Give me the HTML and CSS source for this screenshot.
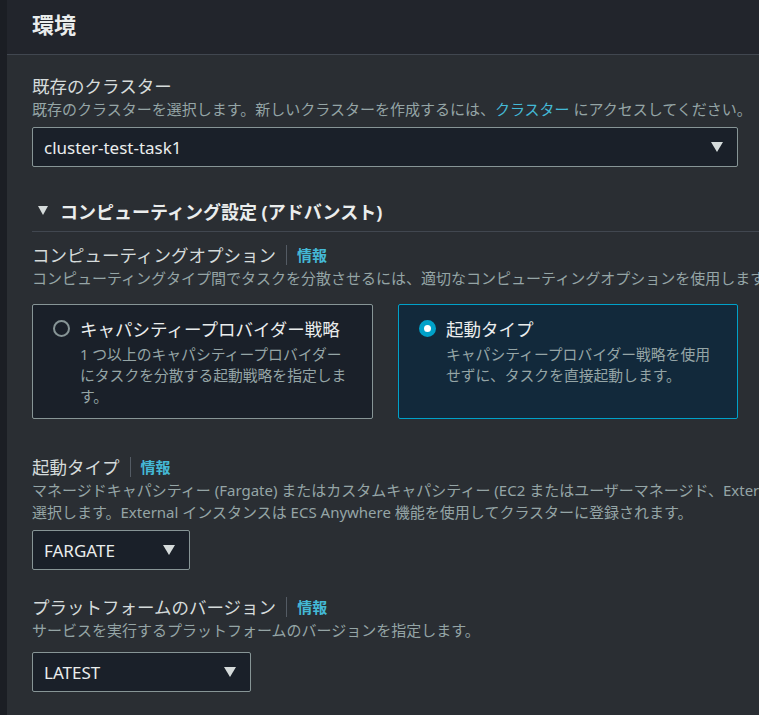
FILE: index.html
```html
<!DOCTYPE html>
<html lang="ja">
<head>
<meta charset="utf-8">
<title>環境</title>
<link rel="stylesheet" href="styles.css">
</head>
<body>
<div class="strip"></div>
<div class="card">
  <div class="card-header"><h2 class="title">環境</h2></div>
  <div class="card-body">
    <div class="field f-cluster">
      <div class="label">既存のクラスター</div>
      <div class="desc">既存のクラスターを選択します。新しいクラスターを作成するには、<a class="link">クラスター</a> にアクセスしてください。</div>
      <div class="select select-wide"><span class="select-text">cluster-test-task1</span><span class="caret"></span></div>
    </div>

    <div class="expander">
      <span class="exp-caret"></span><span class="exp-title">コンピューティング設定 (アドバンスト)</span>
    </div>

    <div class="field f-compute">
      <div class="label">コンピューティングオプション<span class="sep"></span><a class="info">情報</a></div>
      <div class="desc">コンピューティングタイプ間でタスクを分散させるには、適切なコンピューティングオプションを使用します。</div>
      <div class="tiles">
        <div class="tile">
          <div class="tile-head"><span class="radio"></span><span class="tile-title">キャパシティープロバイダー戦略</span></div>
          <div class="tile-desc">1 つ以上のキャパシティープロバイダーにタスクを分散する起動戦略を指定します。</div>
        </div>
        <div class="tile tile-on">
          <div class="tile-head"><span class="radio radio-on"></span><span class="tile-title">起動タイプ</span></div>
          <div class="tile-desc">キャパシティープロバイダー戦略を使用せずに、タスクを直接起動します。</div>
        </div>
      </div>
    </div>

    <div class="field f-launch">
      <div class="label">起動タイプ<span class="sep"></span><a class="info">情報</a></div>
      <div class="desc">マネージドキャパシティー (Fargate) またはカスタムキャパシティー (EC2 またはユーザーマネージド、External インスタンス) を<br>選択します。External インスタンスは ECS Anywhere 機能を使用してクラスターに登録されます。</div>
      <div class="select select-fargate"><span class="select-text">FARGATE</span><span class="caret"></span></div>
    </div>

    <div class="field f-platform">
      <div class="label">プラットフォームのバージョン<span class="sep"></span><a class="info">情報</a></div>
      <div class="desc">サービスを実行するプラットフォームのバージョンを指定します。</div>
      <div class="select select-latest"><span class="select-text">LATEST</span><span class="caret"></span></div>
    </div>
  </div>
</div>
</body>
</html>
```
FILE: styles.css
```css
html, body {
  margin: 0;
  padding: 0;
}
body {
  background: #1b1e24;
  display: flex;
  width: 759px;
  height: 715px;
  overflow: hidden;
  font-family: "Noto Sans", "Noto Sans CJK JP", sans-serif;
  color: #d5dbdb;
}
.strip {
  flex: 0 0 7px;
}
.card {
  flex: 0 0 900px;
  background: #2a2e33;
}
.card-header {
  height: 55px;
  background: #22252c;
  border-bottom: 1px solid #414750;
  padding-left: 25px;
  box-sizing: border-box;
}
.title {
  margin: 0;
  padding-top: 9px;
  font-size: 22px;
  line-height: 30px;
  font-weight: 700;
  color: #eaeded;
}
.card-body {
  padding: 19px 0 0 25px;
}
.label {
  display: flex;
  align-items: center;
  font-size: 17.5px;
  line-height: 24px;
  color: #d5dbdb;
  white-space: nowrap;
}
.sep {
  width: 1px;
  height: 20px;
  background: #545b64;
  margin: 0 10px 0 10px;
}
.info {
  color: #44b9d6;
  font-weight: 700;
  font-size: 15px;
}
.desc {
  font-size: 15px;
  line-height: 22px;
  color: #95a5a6;
  white-space: nowrap;
}
.link {
  color: #44b9d6;
}
.select {
  display: flex;
  align-items: center;
  justify-content: space-between;
  height: 40px;
  box-sizing: border-box;
  background: #1a2029;
  border: 1px solid #879596;
  border-radius: 2px;
  padding: 0 14px 0 11px;
}
.select-text {
  font-size: 17px;
  color: #eaeded;
}
.caret {
  width: 0;
  height: 0;
  border-left: 6.5px solid transparent;
  border-right: 6.5px solid transparent;
  border-top: 10px solid #d5dbdb;
}
.select-wide { width: 706px; }
.select-fargate { width: 158px; }
.select-latest { width: 219px; }

.f-cluster .select { margin-top: 7px; }

.expander {
  width: 727px;
  margin-top: 30px;
  padding-bottom: 7px;
  border-bottom: 1px solid #414750;
  display: flex;
  align-items: center;
  height: 27px;
}
.exp-caret {
  width: 0;
  height: 0;
  border-left: 5.5px solid transparent;
  border-right: 5.5px solid transparent;
  border-top: 9px solid #d5dbdb;
  margin: 0 12px 0 6px;
}
.exp-title {
  font-size: 18px;
  font-weight: 700;
  color: #eaeded;
}

.f-compute { margin-top: 11px; }
.tiles {
  margin-top: 15px;
  display: grid;
  grid-template-columns: 341px 340px;
  column-gap: 25px;
  width: 706px;
}
.tile {
  height: 115px;
  box-sizing: border-box;
  background: #1a2029;
  border: 1px solid #879596;
  border-radius: 2px;
  padding: 11px 20px 0 20px;
}
.tile-on {
  background: #12293b;
  border-color: #00a1c9;
}
.tile-head {
  display: flex;
  align-items: center;
  height: 24px;
}
.radio {
  flex: 0 0 auto;
  width: 17px;
  height: 17px;
  box-sizing: border-box;
  border: 2px solid #879596;
  border-radius: 50%;
  margin-right: 10px;
}
.radio-on {
  border: 5px solid #00a1c9;
  background: #ffffff;
}
.tile-title {
  font-size: 17.5px;
  color: #eaeded;
}
.tile-desc {
  margin-left: 27px;
  margin-top: 4px;
  font-size: 14.8px;
  line-height: 21px;
  color: #95a5a6;
}

.f-launch { margin-top: 36px; }
.f-launch .select { margin-top: 7px; }
.f-platform { margin-top: 25px; }
.f-platform .select { margin-top: 11px; }
```
